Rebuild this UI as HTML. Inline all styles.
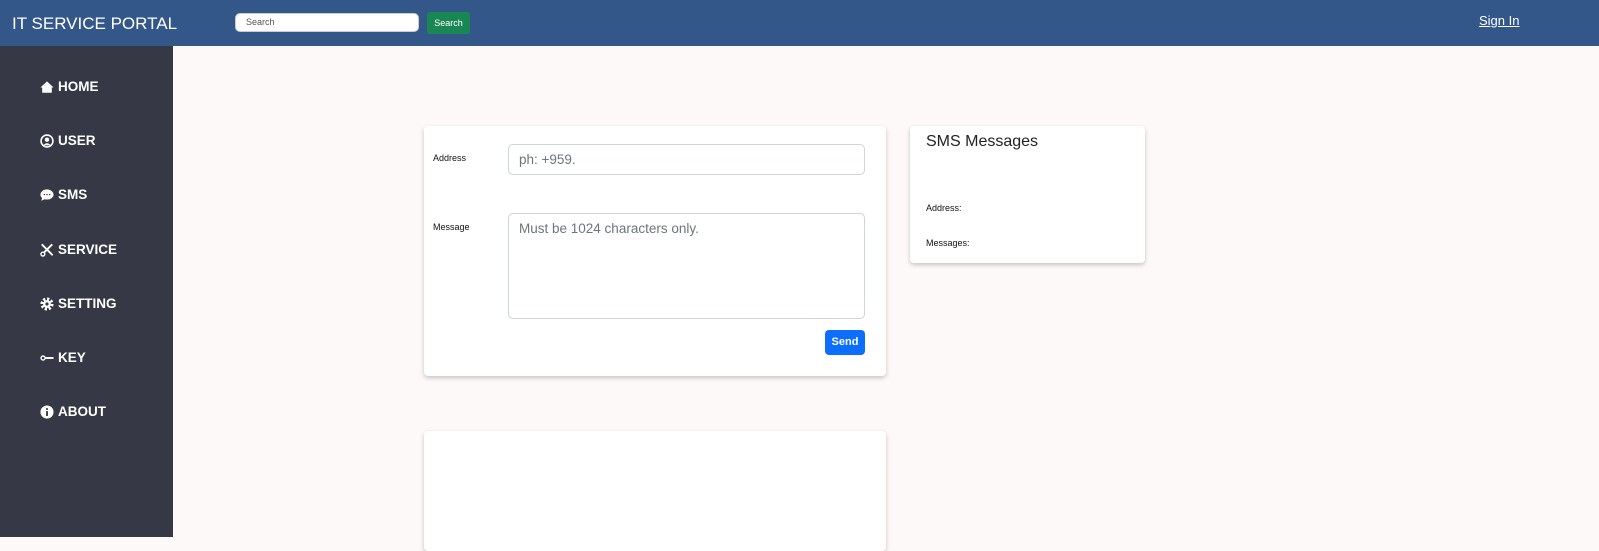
<!DOCTYPE html>
<html><head><style>
*{box-sizing:border-box;margin:0;padding:0}
body{width:1599px;height:537px;overflow:hidden;background:#fdf9f8;font-family:"Liberation Sans",sans-serif;position:relative}
.top{position:absolute;left:0;top:0;width:1599px;height:46px;background:#34578a}
.brand{position:absolute;left:12px;top:14px;color:#fff;font-size:17px}
.search{position:absolute;left:235px;top:13px;width:184px;height:19px;background:#fff;border:1px solid #ccc;border-radius:5px;font-size:9px;color:#555;padding:3px 0 0 10px}
.sbtn{position:absolute;left:427px;top:12px;width:43px;height:22px;background:#198754;border-radius:3px;color:#fff;font-size:9px;text-align:center;line-height:22px}
.sign{position:absolute;left:1479px;top:13px;color:#fff;font-size:13px;text-decoration:underline}
.side{position:absolute;left:0;top:46px;width:173px;height:491px;background:#363846}
.item{position:absolute;left:40px;color:#fff;font-weight:bold;font-size:13.5px;display:flex;align-items:center;gap:4px}
.item svg{width:14px;height:14px}
.card{position:absolute;background:#fff;border-radius:4px;box-shadow:0 2px 5px rgba(0,0,0,.22)}
.lbl{position:absolute;font-size:9px;color:#111}
.inp{position:absolute;border:1px solid #ced4da;border-radius:5px;color:#6c757d;font-size:13.5px;padding:7px 10px}
</style></head><body>
<div class="top"><div class="brand">IT SERVICE PORTAL</div><div class="search">Search</div><div class="sbtn">Search</div><div class="sign">Sign In</div></div>
<div class="side">
<div class="item" style="top:33px"><svg viewBox="0 0 16 16"><path d="M8 1.5L0.5 8.5h2v6h11v-6h2z" fill="#fff"/></svg>HOME</div>
<div class="item" style="top:87px"><svg viewBox="0 0 16 16"><circle cx="8" cy="8" r="6.8" fill="none" stroke="#fff" stroke-width="1.8"/><circle cx="8" cy="6.5" r="2.5" fill="#fff"/><path d="M3.5 13Q8 8 12.5 13" fill="#fff"/></svg>USER</div>
<div class="item" style="top:141px"><svg viewBox="0 0 16 16"><path d="M8 1.5C4 1.5 0.5 4.2 0.5 7.5c0 1.5.7 2.9 1.9 3.9L1.5 14.5l3.8-1.7c.8.3 1.7.4 2.7.4 4.2 0 7.5-2.6 7.5-5.7S12 1.5 8 1.5z" fill="#fff"/><circle cx="5" cy="7.5" r=".8" fill="#363846"/><circle cx="8" cy="7.5" r=".8" fill="#363846"/><circle cx="11" cy="7.5" r=".8" fill="#363846"/></svg>SMS</div>
<div class="item" style="top:196px"><svg viewBox="0 0 16 16"><path d="M2 1.5l12.5 12.5M14 1.5L5 10.5" stroke="#fff" stroke-width="2.2"/><circle cx="3.3" cy="12.7" r="2.2" fill="none" stroke="#fff" stroke-width="1.6"/></svg>SERVICE</div>
<div class="item" style="top:250px"><svg viewBox="0 0 16 16"><circle cx="8" cy="8" r="5.5" fill="none" stroke="#fff" stroke-width="4" stroke-dasharray="2.4 1.9"/><circle cx="8" cy="8" r="4.5" fill="#fff"/><circle cx="8" cy="8" r="1.8" fill="#363846"/></svg>SETTING</div>
<div class="item" style="top:304px"><svg viewBox="0 0 16 16"><circle cx="3.5" cy="8" r="2.3" fill="none" stroke="#fff" stroke-width="1.6"/><path d="M6 8h9.5" stroke="#fff" stroke-width="2.2"/></svg>KEY</div>
<div class="item" style="top:358px"><svg viewBox="0 0 16 16"><circle cx="8" cy="8" r="7.5" fill="#fff"/><rect x="6.9" y="7" width="2.2" height="5.5" fill="#363846"/><circle cx="8" cy="4.6" r="1.2" fill="#363846"/></svg>ABOUT</div>
</div>
<div class="card" style="left:424px;top:126px;width:462px;height:250px">
<div class="lbl" style="left:9px;top:27px">Address</div>
<div class="inp" style="left:84px;top:18px;width:357px;height:31px">ph: +959.</div>
<div class="lbl" style="left:9px;top:96px">Message</div>
<div class="inp" style="left:84px;top:87px;width:357px;height:106px">Must be 1024 characters only.</div>
<div style="position:absolute;left:401px;top:204px;width:40px;height:25px;background:#0d6efd;border-radius:4px;color:#fff;font-size:11px;font-weight:bold;text-align:center;line-height:25px">Send</div>
</div>
<div class="card" style="left:910px;top:126px;width:235px;height:137px">
<div style="position:absolute;left:16px;top:7px;font-size:16px;color:#222">SMS Messages</div>
<div class="lbl" style="left:16px;top:77px">Address:</div>
<div class="lbl" style="left:16px;top:112px">Messages:</div>
</div>
<div class="card" style="left:424px;top:431px;width:462px;height:120px"></div>
</body></html>
